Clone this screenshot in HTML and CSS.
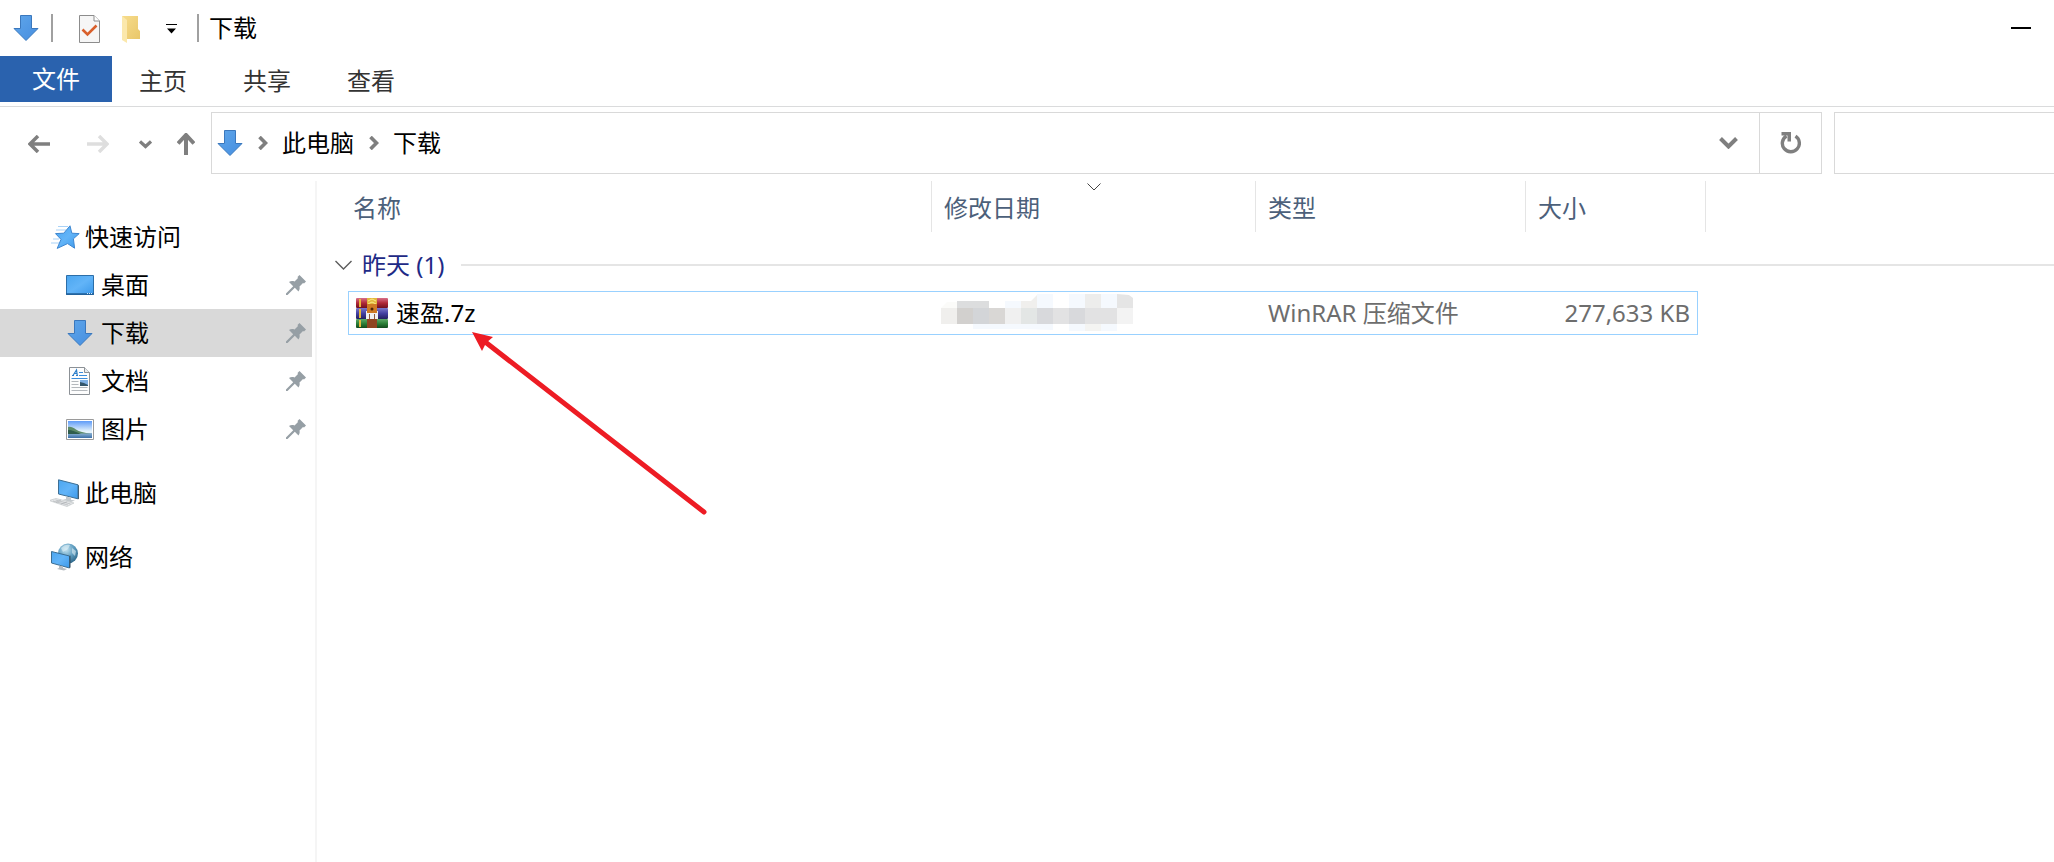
FILE: index.html
```html
<!DOCTYPE html>
<html lang="zh-CN">
<head>
    <meta charset="UTF-8">
    <meta name="viewport" content="width=device-width, initial-scale=1.0">
    <title>下载</title>
    <link rel="stylesheet" href="styles.css">
</head>
<body>

<!-- Shared symbols -->
<svg class="symbols" aria-hidden="true">
    <defs>
        <linearGradient id="blue" x1="0" y1="0" x2="1" y2="1">
            <stop offset="0" stop-color="#5fa6ea"/>
            <stop offset="1" stop-color="#468ee0"/>
        </linearGradient>
        <linearGradient id="screen" x1="0" y1="0" x2="1" y2="1">
            <stop offset="0" stop-color="#4ba6f0"/>
            <stop offset="0.5" stop-color="#62b4f8"/>
            <stop offset="1" stop-color="#3c99ea"/>
        </linearGradient>
        <linearGradient id="folder" x1="0" y1="0" x2="1" y2="1">
            <stop offset="0" stop-color="#f7dc8c"/>
            <stop offset="1" stop-color="#e9c76a"/>
        </linearGradient>
        <linearGradient id="sky" x1="0" y1="0" x2="0" y2="1">
            <stop offset="0" stop-color="#5f9cf8"/>
            <stop offset="0.6" stop-color="#e4f2fb"/>
            <stop offset="1" stop-color="#e4f2fb"/>
        </linearGradient>
        <linearGradient id="water" x1="0" y1="0" x2="0" y2="1">
            <stop offset="0" stop-color="#8fb4d4"/>
            <stop offset="1" stop-color="#3a6fa8"/>
        </linearGradient>
        <radialGradient id="globe" cx="0.4" cy="0.3" r="0.8">
            <stop offset="0" stop-color="#c5e4f2"/>
            <stop offset="0.5" stop-color="#5f9dc0"/>
            <stop offset="1" stop-color="#215a7d"/>
        </radialGradient>
        <linearGradient id="red" x1="0" y1="0" x2="0" y2="1">
            <stop offset="0" stop-color="#d8708a"/>
            <stop offset="0.5" stop-color="#b02838"/>
            <stop offset="1" stop-color="#701020"/>
        </linearGradient>
        <linearGradient id="violet" x1="0" y1="0" x2="0" y2="1">
            <stop offset="0" stop-color="#7a78cc"/>
            <stop offset="0.5" stop-color="#4340a0"/>
            <stop offset="1" stop-color="#232060"/>
        </linearGradient>
        <linearGradient id="green" x1="0" y1="0" x2="0" y2="1">
            <stop offset="0" stop-color="#5faa68"/>
            <stop offset="0.5" stop-color="#2c8038"/>
            <stop offset="1" stop-color="#124a1c"/>
        </linearGradient>
    </defs>
    <symbol id="icon-down" viewBox="0 0 26 26">
        <path d="M7.500 .5h11v13h6.500L13 25.500 1 13.500h6.500z" fill="url(#blue)" stroke="#3b78bd"/>
    </symbol>
    <symbol id="icon-pin" viewBox="0 0 20 20">
        <path d="M13.500 0L20 6.500 18 8.500 17 8l-3.500 3.500c.5 2 0 3.500-1 5L8.800 12.800 1.500 20H0v-1.500L7.200 11.200 3 7C4.500 6 6.500 5.800 8.500 6.500L12 3l-.5-1z" fill="#969fa5"/>
    </symbol>
</svg>

<!-- Title bar -->
<header class="title-bar">
    <svg class="icon-26" aria-hidden="true"><use href="#icon-down"/></svg>
    <span class="separator"></span>
    <button class="quick-button" aria-label="属性">
        <svg width="21" height="28" viewBox="0 0 21 28">
            <path d="M.5.5h14.500l5.500 5.500v21.500H.5z" fill="#f6f6f6" stroke="#8c8c8c"/>
            <path d="M15 .5V6h5.500" fill="#fff" stroke="#8c8c8c"/>
            <path d="M3.500 14.500l5 5 9-9" fill="none" stroke="#d9602c" stroke-width="2.600"/>
        </svg>
    </button>
    <button class="quick-button" aria-label="新建文件夹">
        <svg width="18" height="27" viewBox="0 0 18 27">
            <path d="M0 0h16v13l2 2v8H5z" fill="url(#folder)"/>
            <path d="M0 0l5 4v23l-5-3z" fill="#fbe8ac"/>
        </svg>
    </button>
    <button class="quick-button" aria-label="自定义快速访问工具栏">
        <svg width="11" height="10" viewBox="0 0 11 10">
            <path d="M0 0h11v1H0zM1 4.500h9L5.500 9.500z" fill="#000"/>
        </svg>
    </button>
    <span class="separator"></span>
    <h1>下载</h1>
    <button class="minimize" aria-label="最小化"></button>
</header>

<!-- Ribbon tabs -->
<nav class="tabs">
    <button class="tab active">文件</button>
    <button class="tab">主页</button>
    <button class="tab">共享</button>
    <button class="tab">查看</button>
</nav>

<!-- Address row -->
<div class="toolbar">
    <div class="history">
        <button aria-label="后退">
            <svg width="22" height="18" viewBox="0 0 22 18"><path d="M22 9H2M10 1L2 9l8 8" fill="none" stroke="#7f7f7f" stroke-width="3.500"/></svg>
        </button>
        <button aria-label="前进">
            <svg width="22" height="18" viewBox="0 0 22 18"><path d="M0 9h20M12 1l8 8-8 8" fill="none" stroke="#dedede" stroke-width="3.500"/></svg>
        </button>
        <button aria-label="最近浏览的位置">
            <svg width="13" height="9" viewBox="0 0 13 9"><path d="M1 1.500l5.500 5 5.500-5" fill="none" stroke="#7f7f7f" stroke-width="3.200"/></svg>
        </button>
        <button aria-label="上移">
            <svg width="18" height="22" viewBox="0 0 18 22"><path d="M9 22V2M1 10.500L9 2l8 8.500" fill="none" stroke="#7f7f7f" stroke-width="4"/></svg>
        </button>
    </div>
    <div class="address">
        <svg class="icon-26" aria-hidden="true"><use href="#icon-down"/></svg>
        <svg class="crumb-arrow" viewBox="0 0 10 14"><path d="M1.500 1l6 6-6 6" fill="none" stroke="#7f7f7f" stroke-width="3.600"/></svg>
        <a href="#">此电脑</a>
        <svg class="crumb-arrow" viewBox="0 0 10 14"><path d="M1.500 1l6 6-6 6" fill="none" stroke="#7f7f7f" stroke-width="3.600"/></svg>
        <a href="#">下载</a>
        <button class="drop" aria-label="以前的位置">
            <svg width="19" height="12" viewBox="0 0 19 12"><path d="M1.500 1.500l8 8 8-8" fill="none" stroke="#7f7f7f" stroke-width="4"/></svg>
        </button>
        <button class="refresh" aria-label="刷新">
            <svg width="21" height="22" viewBox="0 0 21 22">
                <path d="M15.500 4.200A8.500 8.500 0 1 1 6.500 4" fill="none" stroke="#7f7f7f" stroke-width="3.400"/>
                <path d="M1.500 0H11v9.500H7.500V3.500h-6z" fill="#7f7f7f"/>
            </svg>
        </button>
    </div>
    <input class="search" type="search" aria-label="搜索">
</div>

<div class="main">
    <!-- Navigation pane -->
    <nav class="sidebar">
        <a class="item root" href="#">
            <svg width="30" height="24" viewBox="0 0 30 24">
                <path d="M8 1.500h10M6 5h10M1 18h8M3 14h6" stroke="#a9d2f7" fill="none"/>
                <path d="M20 .8l1.800 7.400 7.400.4-5.800 5.200 1.200 9.400-7-4.600-10.400 4.800 3.800-9L5.500 8.600l8.300-.4z" fill="url(#screen)" stroke="#3e86d0"/>
            </svg>
            快速访问
        </a>
        <a class="item" href="#">
            <svg width="28" height="20" viewBox="0 0 28 20">
                <path d="M.5.5h27v19H.5z" fill="url(#screen)" stroke="#2c6ea8"/>
                <path d="M0 19h28" stroke="#1f5f98" stroke-width="1.500"/>
                <path d="M21 18.500h5" stroke="#cfe8fb" stroke-dasharray="1 1"/>
            </svg>
            桌面
            <svg class="pin" aria-label="已固定"><use href="#icon-pin"/></svg>
        </a>
        <a class="item selected" href="#">
            <svg width="28" height="26"><use href="#icon-down"/></svg>
            下载
            <svg class="pin" aria-label="已固定"><use href="#icon-pin"/></svg>
        </a>
        <a class="item" href="#">
            <svg width="28" height="28" viewBox="-3 0 28 28">
                <path d="M.5.500h15l5 5v22H.5z" fill="#fdfdfd" stroke="#8c9196"/>
                <path d="M15.500.5v5h5" fill="#e8ebee" stroke="#8c9196"/>
                <path d="M4 8.500L7.500 3l.8 5.500M5 6.500h3M3 8.500h2M7 8.500h2" fill="none" stroke="#2f7fca" stroke-width="1.200"/>
                <path d="M10 5.500h4M10 8.500h8M2.500 11.500h16" stroke="#3c8ddb"/>
                <path d="M2.500 14.500h7M2.500 17.500h7M2.500 20.500h16M2.500 23.500h16" stroke="#b4b8bc"/>
                <path d="M11 13h8v6h-8z" fill="#7fb0e4"/>
                <path d="M11 15l4 1 4 2v1h-8z" fill="#33566b"/>
            </svg>
            文档
            <svg class="pin" aria-label="已固定"><use href="#icon-pin"/></svg>
        </a>
        <a class="item" href="#">
            <svg width="28" height="21" viewBox="0 0 28 21">
                <path d="M.5.5h27v20H.5z" fill="#fff" stroke="#9a9a9a"/>
                <path d="M2 2h24v17H2z" fill="url(#sky)"/>
                <path d="M2 14h24v5H2z" fill="url(#water)"/>
                <path d="M2 8c3-.5 5 .5 8 2.500s8 3.500 15 4H2z" fill="#5c8a68"/>
                <path d="M2 11c4 0 8 2 13 4H2z" fill="#2f5d4c"/>
            </svg>
            图片
            <svg class="pin" aria-label="已固定"><use href="#icon-pin"/></svg>
        </a>
        <a class="item root group" href="#">
            <svg width="30" height="28" viewBox="1 0 30 28">
                <path d="M9.500.8l19.500 5v14L9.500 15z" fill="url(#screen)" stroke="#3d6f94"/>
                <path d="M29 6l.8.5V20l-.8.3z" fill="#2e4a5e"/>
                <path d="M17 17.500l5 1.200v2l4 .8-4 1.500-8-2.200 3-.8z" fill="#c3c9cd"/>
                <path d="M0 21.500l7-2 18 4.500-7 3.500z" fill="#e6e8ea" stroke="#b9bdc0" stroke-width=".6"/>
                <path d="M4 22l15 4M6.500 21l15 4M7 23.500l5-2.500M12 25l6-2" stroke="#a9adb0" stroke-width=".6"/>
            </svg>
            此电脑
        </a>
        <a class="item root group" href="#">
            <svg width="30" height="28" viewBox="1 0 30 28">
                <circle cx="19" cy="10.500" r="10" fill="url(#globe)"/>
                <path d="M12 5c3-3 6-4 9-3l-2 4-5 3zM23 5l4 3-1 5-3-3z" fill="#dff0f6" opacity=".6"/>
                <path d="M2.500 8.500L20.500 13v12L2.500 20z" fill="url(#screen)" stroke="#3d6f94"/>
                <path d="M20.500 13l1-.5v12l-1 .5z" fill="#2e4a5e"/>
                <path d="M10 22.500l4 1v1.500l4 1-3 1.500-7-1.500 2-1z" fill="#b5bbc0"/>
            </svg>
            网络
        </a>
    </nav>

    <!-- File list -->
    <main class="content">
        <table class="files">
            <colgroup>
                <col class="col-gutter">
                <col class="col-name">
                <col class="col-date">
                <col class="col-type">
                <col class="col-size">
                <col class="col-end">
                <col>
            </colgroup>
            <thead>
                <tr>
                    <td></td>
                    <th scope="col">名称</th>
                    <th scope="col">
                        修改日期
                        <svg class="sort" viewBox="0 0 14 8"><path d="M.5.5l6.500 6.500 6.500-6.500" fill="none" stroke="#444"/></svg>
                    </th>
                    <th scope="col">类型</th>
                    <th scope="col" colspan="2">大小</th>
                    <td></td>
                </tr>
            </thead>
            <tbody>
                <tr>
                    <td colspan="7">
                        <button class="group-header">
                            <svg width="17" height="10" viewBox="0 0 17 10"><path d="M.5 1l8 8 8-8" fill="none" stroke="#5c5c5c" stroke-width="1.400"/></svg>
                            昨天 (1)
                        </button>
                    </td>
                </tr>
                <tr class="file">
                    <td></td>
                    <td class="name">
                        <div class="file-name">
                            <svg width="32" height="30" viewBox="0 0 32 30">
                                <rect width="32" height="10" rx="1" fill="url(#red)"/>
                                <rect y="10" width="32" height="11" rx="1" fill="url(#violet)"/>
                                <rect y="21" width="32" height="9" rx="1" fill="url(#green)"/>
                                <path d="M3 1h2v8H3zM3 11h2v9H3zM3 22h2v7H3z" fill="#e8b83c"/>
                                <path d="M11 0h10v7H11z" fill="#e2b93e"/>
                                <path d="M11 20h10v10H11z" fill="#8f4420"/>
                                <path d="M12 3l4-2 4 2M12 6l4-2 4 2" fill="none" stroke="#fbe98c"/>
                                <path d="M10 13h12v8H10z" fill="#f1f1f1"/>
                                <path d="M11 6h10v9H11z" fill="#cf7a24"/>
                                <circle cx="16" cy="11" r="1.500" fill="#4c2408"/>
                                <path d="M13 21v-5h1v5zM18 21v-5h1v5z" fill="#8c5a3c"/>
                            </svg>
                            速盈.7z
                        </div>
                        <svg class="pointer" viewBox="0 0 240 186" aria-hidden="true">
                            <path d="M12 9l220 171" stroke="#ed1c24" stroke-width="5" stroke-linecap="round"/>
                            <path d="M0 0l21 5-7 6-4 8z" fill="#ed1c24"/>
                        </svg>
                    </td>
                    <td class="date">
                        <svg class="mosaic" viewBox="0 0 192 38" aria-label="已打码">
                            <path d="M0 14l6-6h10v6H0z" fill="#fbfbf9"/>
                            <path d="M16 7h32v7H16z" fill="#dcddde"/>
                            <path d="M64 7h16v7H64zM96 0h16v14H96zM128 0h16v14h-16zM160 0h16v14h-16zM32 30h80v6l-30-1H32zM128 30h16v7h-16zM160 30h16v7h-16z" fill="#f5f9fe"/>
                            <path d="M80 7h10l6-6v13H80z" fill="#f0efed"/>
                            <path d="M144 0h16v14h-16z" fill="#ededec"/>
                            <path d="M176 0l12 1 4 3v10h-16z" fill="#e5e5e5"/>
                            <path d="M144 30h16v7h-16z" fill="#f4f4f2"/>
                            <path d="M0 14h16v16H0z" fill="#f0efed"/>
                            <path d="M16 14h16v16H16z" fill="#d2d0ce"/>
                            <path d="M32 14h16v16H32z" fill="#d3d5d8"/>
                            <path d="M48 14h16v16H48z" fill="#d9d7d5"/>
                            <path d="M64 14h16v16H64z" fill="#f0f0f0"/>
                            <path d="M80 14h16v16H80z" fill="#e3e6e5"/>
                            <path d="M96 14h16v16H96zM128 14h16v16h-16z" fill="#d8d9dc"/>
                            <path d="M112 14h16v16h-16zM144 14h32v16h-32z" fill="#e2e2e3"/>
                            <path d="M176 14h16v16h-16z" fill="#f3f3f3"/>
                        </svg>
                    </td>
                    <td>WinRAR 压缩文件</td>
                    <td class="size">277,633 KB</td>
                    <td></td>
                    <td></td>
                </tr>
            </tbody>
        </table>
    </main>
</div>

</body>
</html>
```
FILE: styles.css
```css
* {
    box-sizing: border-box;
}

body {
    margin: 0;
    min-height: 100vh;
    display: flex;
    flex-direction: column;
    background-color: #fff;
    color: #000;
    font-family: "Noto Sans", "Noto Sans CJK SC", sans-serif;
    font-size: 24px;
    line-height: 32px;
    overflow-x: hidden;
}

button,
input {
    margin: 0;
    padding: 0;
    border: none;
    background: none;
    color: inherit;
    font: inherit;
}

a {
    color: inherit;
    text-decoration: none;
}

svg {
    display: block;
    flex-shrink: 0;
}

.symbols {
    position: absolute;
    width: 0;
    height: 0;
}

.icon-26 {
    width: 26px;
    height: 26px;
}

/* Title bar */
.title-bar {
    display: flex;
    align-items: center;
    height: 56px;
    padding: 0 10px 0 13px;
}

.title-bar h1 {
    margin: 0 0 0 10px;
    font-size: 24px;
    font-weight: 400;
}

.separator {
    width: 2px;
    height: 28px;
    margin-left: 12px;
    background-color: #a0a0a0;
}

.quick-button {
    display: flex;
    justify-content: center;
    width: 41px;
    padding-top: 2px;
}

.separator + .quick-button {
    margin-left: 16px;
}

.quick-button + .separator {
    margin-left: 5px;
}

.minimize {
    width: 46px;
    height: 54px;
    margin-left: auto;
    display: flex;
    align-items: center;
    justify-content: center;
}

.minimize::before {
    content: "";
    width: 20px;
    height: 2px;
    background-color: #000;
}

/* Ribbon tabs */
.tabs {
    display: flex;
    height: 51px;
    border-bottom: 1px solid #dadbdc;
}

.tab {
    width: 104px;
    height: 50px;
    padding-right: 2px;
    color: #333;
}

.tab.active {
    width: 112px;
    height: 46px;
    padding-right: 0;
    background-color: #2a62ae;
    color: #fff;
}

/* Address row */
.toolbar {
    display: flex;
    padding: 5px 0 7px;
}

.history {
    display: flex;
    align-items: center;
    justify-content: space-between;
    width: 211px;
    padding: 2px 16px 0 28px;
}

.history button:nth-child(2) {
    margin-left: 14px;
}

.history button:nth-child(3) {
    margin-left: 8px;
}

.history button:nth-child(4) {
    margin-left: 2px;
}

.address {
    flex: 1;
    display: flex;
    align-items: center;
    height: 62px;
    padding-left: 5px;
    border: 1px solid #d9d9d9;
}

.crumb-arrow {
    width: 10px;
    height: 14px;
    margin: 0 14px 0 15px;
}

.drop,
.refresh {
    display: flex;
    align-items: center;
    justify-content: center;
    width: 62px;
    height: 60px;
}

.drop {
    margin-left: auto;
}

.refresh {
    border-left: 1px solid #d9d9d9;
}

.search {
    width: 220px;
    margin-left: 12px;
    padding: 0 12px;
    border: 1px solid #d9d9d9;
    border-right: none;
}

/* Navigation pane */
.main {
    flex: 1;
    display: flex;
}

.sidebar {
    width: 317px;
    padding: 32px 3px 0 0;
    border-right: 2px solid #f5f5f5;
}

.item {
    display: flex;
    align-items: center;
    gap: 7px;
    height: 48px;
    padding: 0 6px 0 66px;
}

.item.root {
    gap: 5px;
    padding-left: 50px;
}

.item.group {
    margin-top: 16px;
}

.item.selected {
    background-color: #d9d9d9;
}

.pin {
    width: 20px;
    height: 20px;
    margin-left: auto;
}

/* File list */
.content {
    flex: 1;
}

.files {
    width: 100%;
    table-layout: fixed;
    border-collapse: separate;
    border-spacing: 0;
}

.files td,
.files th {
    padding: 0;
}

.col-gutter {
    width: 31px;
}

.col-name {
    width: 584px;
}

.col-date {
    width: 324px;
}

.col-type {
    width: 270px;
}

.col-size {
    width: 172px;
}

.col-end {
    width: 8px;
}

.files th {
    position: relative;
    height: 51px;
    padding: 2px 0 0 12px;
    border-right: 1px solid #e5e5e5;
    color: #4c607a;
    font-weight: 400;
    text-align: left;
}

.files th:nth-child(2) {
    padding-left: 5px;
}

.sort {
    position: absolute;
    top: 2px;
    left: calc(50% - 7px);
    width: 14px;
    height: 8px;
}

.group-header {
    display: flex;
    align-items: center;
    gap: 10px;
    width: 100%;
    height: 59px;
    padding: 7px 0 0 18px;
    color: #1e2a86;
}

.group-header::after {
    content: "";
    flex: 1;
    height: 2px;
    margin-left: 7px;
    background-color: #e5e5e5;
}

.file td {
    height: 44px;
    color: #6d6d6d;
}

.file td:nth-child(n+2):nth-child(-n+5) {
    padding-left: 12px;
    border-top: 1px solid #99d1ff;
    border-bottom: 1px solid #99d1ff;
}

.file .name {
    position: relative;
    border-left: 1px solid #99d1ff;
    color: #000;
}

.file td.name:nth-child(2) {
    padding-left: 7px;
}

.file td.date:nth-child(3) {
    padding-left: 9px;
}

.file-name {
    display: flex;
    align-items: center;
    gap: 8px;
}

.file td.size {
    padding-right: 7px;
    border-right: 1px solid #99d1ff;
    text-align: right;
}

.mosaic {
    width: 192px;
    height: 38px;
}

/* Red arrow pointing at the archive */
.pointer {
    position: absolute;
    top: 40px;
    left: 123px;
    width: 240px;
    height: 186px;
    z-index: 1;
    pointer-events: none;
}
```
